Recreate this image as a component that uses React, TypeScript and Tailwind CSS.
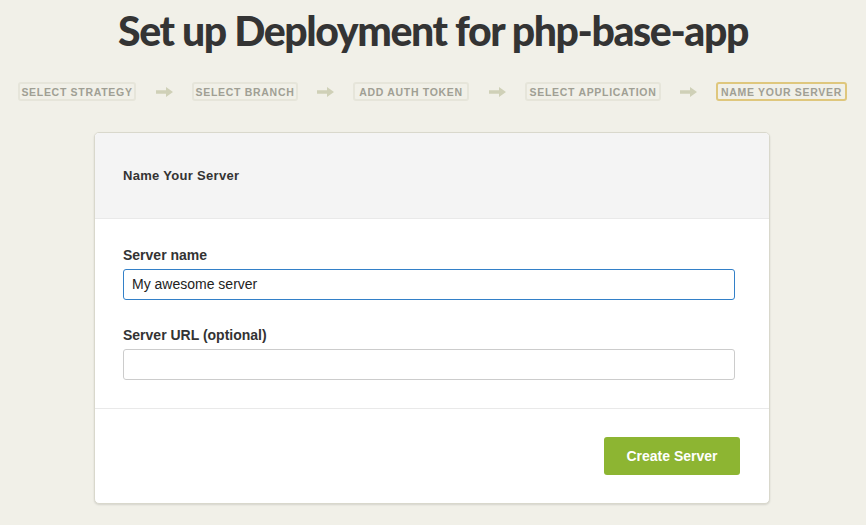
import React from "react";

const Arrow = () => (
  <svg width="17" height="10" viewBox="0 0 17 10" className="shrink-0">
    <path d="M0 3.2 H10 V0 L17 5 L10 10 V6.8 H0 Z" fill="#cfd0b7" />
  </svg>
);

const Step = ({ label, w, active }: { label: string; w: string; active?: boolean }) => (
  <div
    className={`${w} h-[19px] flex items-center justify-center rounded-[3px] border-2 text-[10.5px] font-bold tracking-[0.7px] text-[#a09f94] leading-none whitespace-nowrap ${
      active ? "border-[#dfc77d]" : "border-[#e6e5da]"
    }`}
  >
    <span className="pt-[1px]">{label}</span>
  </div>
);

export default function App() {
  return (
    <div
      className="w-[866px] h-[525px] bg-[#f1f0e8] overflow-hidden"
      style={{ fontFamily: "'Helvetica Neue', 'Liberation Sans', Arial, sans-serif" }}
    >
      <h1
        className="text-center text-[41px] font-black text-[#343434] tracking-[-1.4px] leading-none pt-[10px] h-[60px]"
        style={{ fontFamily: "Lato, 'Liberation Sans', sans-serif" }}
      >
        Set up Deployment for php-base-app
      </h1>
      <div className="flex items-center mt-[22px] ml-[18px] h-[19px]">
        <Step label="SELECT STRATEGY" w="w-[118px]" />
        <div className="w-[56px] flex justify-center"><Arrow /></div>
        <Step label="SELECT BRANCH" w="w-[106px]" />
        <div className="w-[55px] flex justify-center"><Arrow /></div>
        <Step label="ADD AUTH TOKEN" w="w-[116px]" />
        <div className="w-[56px] flex justify-center"><Arrow /></div>
        <Step label="SELECT APPLICATION" w="w-[136px]" />
        <div className="w-[55px] flex justify-center"><Arrow /></div>
        <Step label="NAME YOUR SERVER" w="w-[131px]" active />
      </div>
      <div className="ml-[94px] mt-[31px] w-[676px] h-[372px] bg-white border border-[#d9d8cc] rounded-[5px] shadow-[0_1px_2px_rgba(0,0,0,0.12)] overflow-hidden flex flex-col">
        <div className="h-[86px] bg-[#f4f4f4] border-b border-[#e9e9e9] flex items-center pl-[28px]">
          <span className="text-[13px] font-bold text-[#333] tracking-[0.3px]">Name Your Server</span>
        </div>
        <div className="pl-[28px] pr-[34px] pt-[28px] pb-[28px] border-b border-[#e9e9e9]">
          <label className="block text-[14px] font-bold text-[#333] leading-[16px] mb-[6px]">Server name</label>
          <div className="h-[31px] border border-[#3380c8] rounded-[3px] flex items-center px-[8px] text-[14px] text-[#222]">
            My awesome server
          </div>
          <label className="block text-[14px] font-bold text-[#333] leading-[16px] mt-[27px] mb-[6px]">Server URL (optional)</label>
          <div className="h-[31px] border border-[#cccccc] rounded-[3px]" />
        </div>
        <div className="flex justify-end px-[29px] pt-[28px]">
          <button className="w-[136px] h-[38px] bg-[#8db532] rounded-[3px] text-white text-[14px] font-bold">
            Create Server
          </button>
        </div>
      </div>
    </div>
  );
}
